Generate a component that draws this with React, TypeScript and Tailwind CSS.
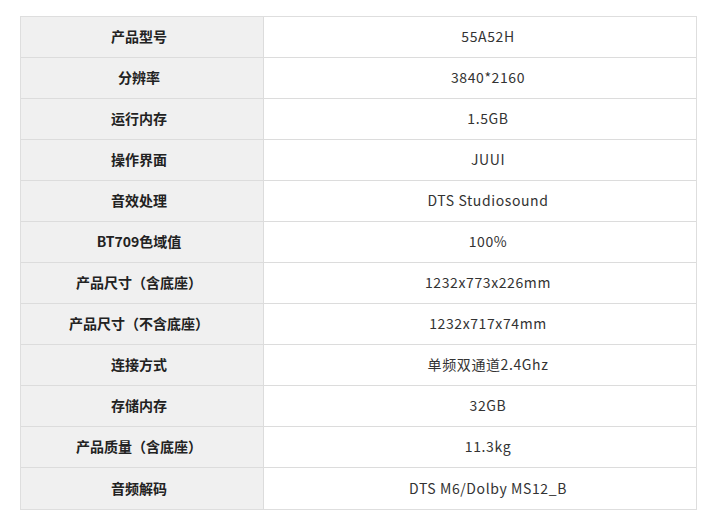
import React from "react";

const rows: [string, string][] = [
  ["产品型号", "55A52H"],
  ["分辨率", "3840*2160"],
  ["运行内存", "1.5GB"],
  ["操作界面", "JUUI"],
  ["音效处理", "DTS Studiosound"],
  ["BT709色域值", "100%"],
  ["产品尺寸（含底座）", "1232x773x226mm"],
  ["产品尺寸（不含底座）", "1232x717x74mm"],
  ["连接方式", "单频双通道2.4Ghz"],
  ["存储内存", "32GB"],
  ["产品质量（含底座）", "11.3kg"],
  ["音频解码", "DTS M6/Dolby MS12_B"],
];

export default function App() {
  return (
    <div
      className="w-[716px] h-[524px] bg-white pt-[16px] pl-[20px]"
      style={{ fontFamily: '"Noto Sans CJK SC", "Noto Sans", sans-serif' }}
    >
      <div className="w-[677px] border border-[#dedede] flex flex-col">
        {rows.map(([k, v], i) => (
          <div
            key={i}
            className={`flex h-[41px] ${i < rows.length - 1 ? "border-b border-[#dcdcdc]" : ""}`}
          >
            <div className="w-[243px] bg-[#f0f0f0] border-r border-[#dcdcdc] flex items-center justify-center pr-[6px] pb-[1px] text-[14px] font-bold text-[#222]">
              {k}
            </div>
            <div className="flex-1 flex items-center justify-center pl-[16px] pb-[1px] text-[14px] text-[#333] tracking-[0.6px]">
              {v}
            </div>
          </div>
        ))}
      </div>
    </div>
  );
}
